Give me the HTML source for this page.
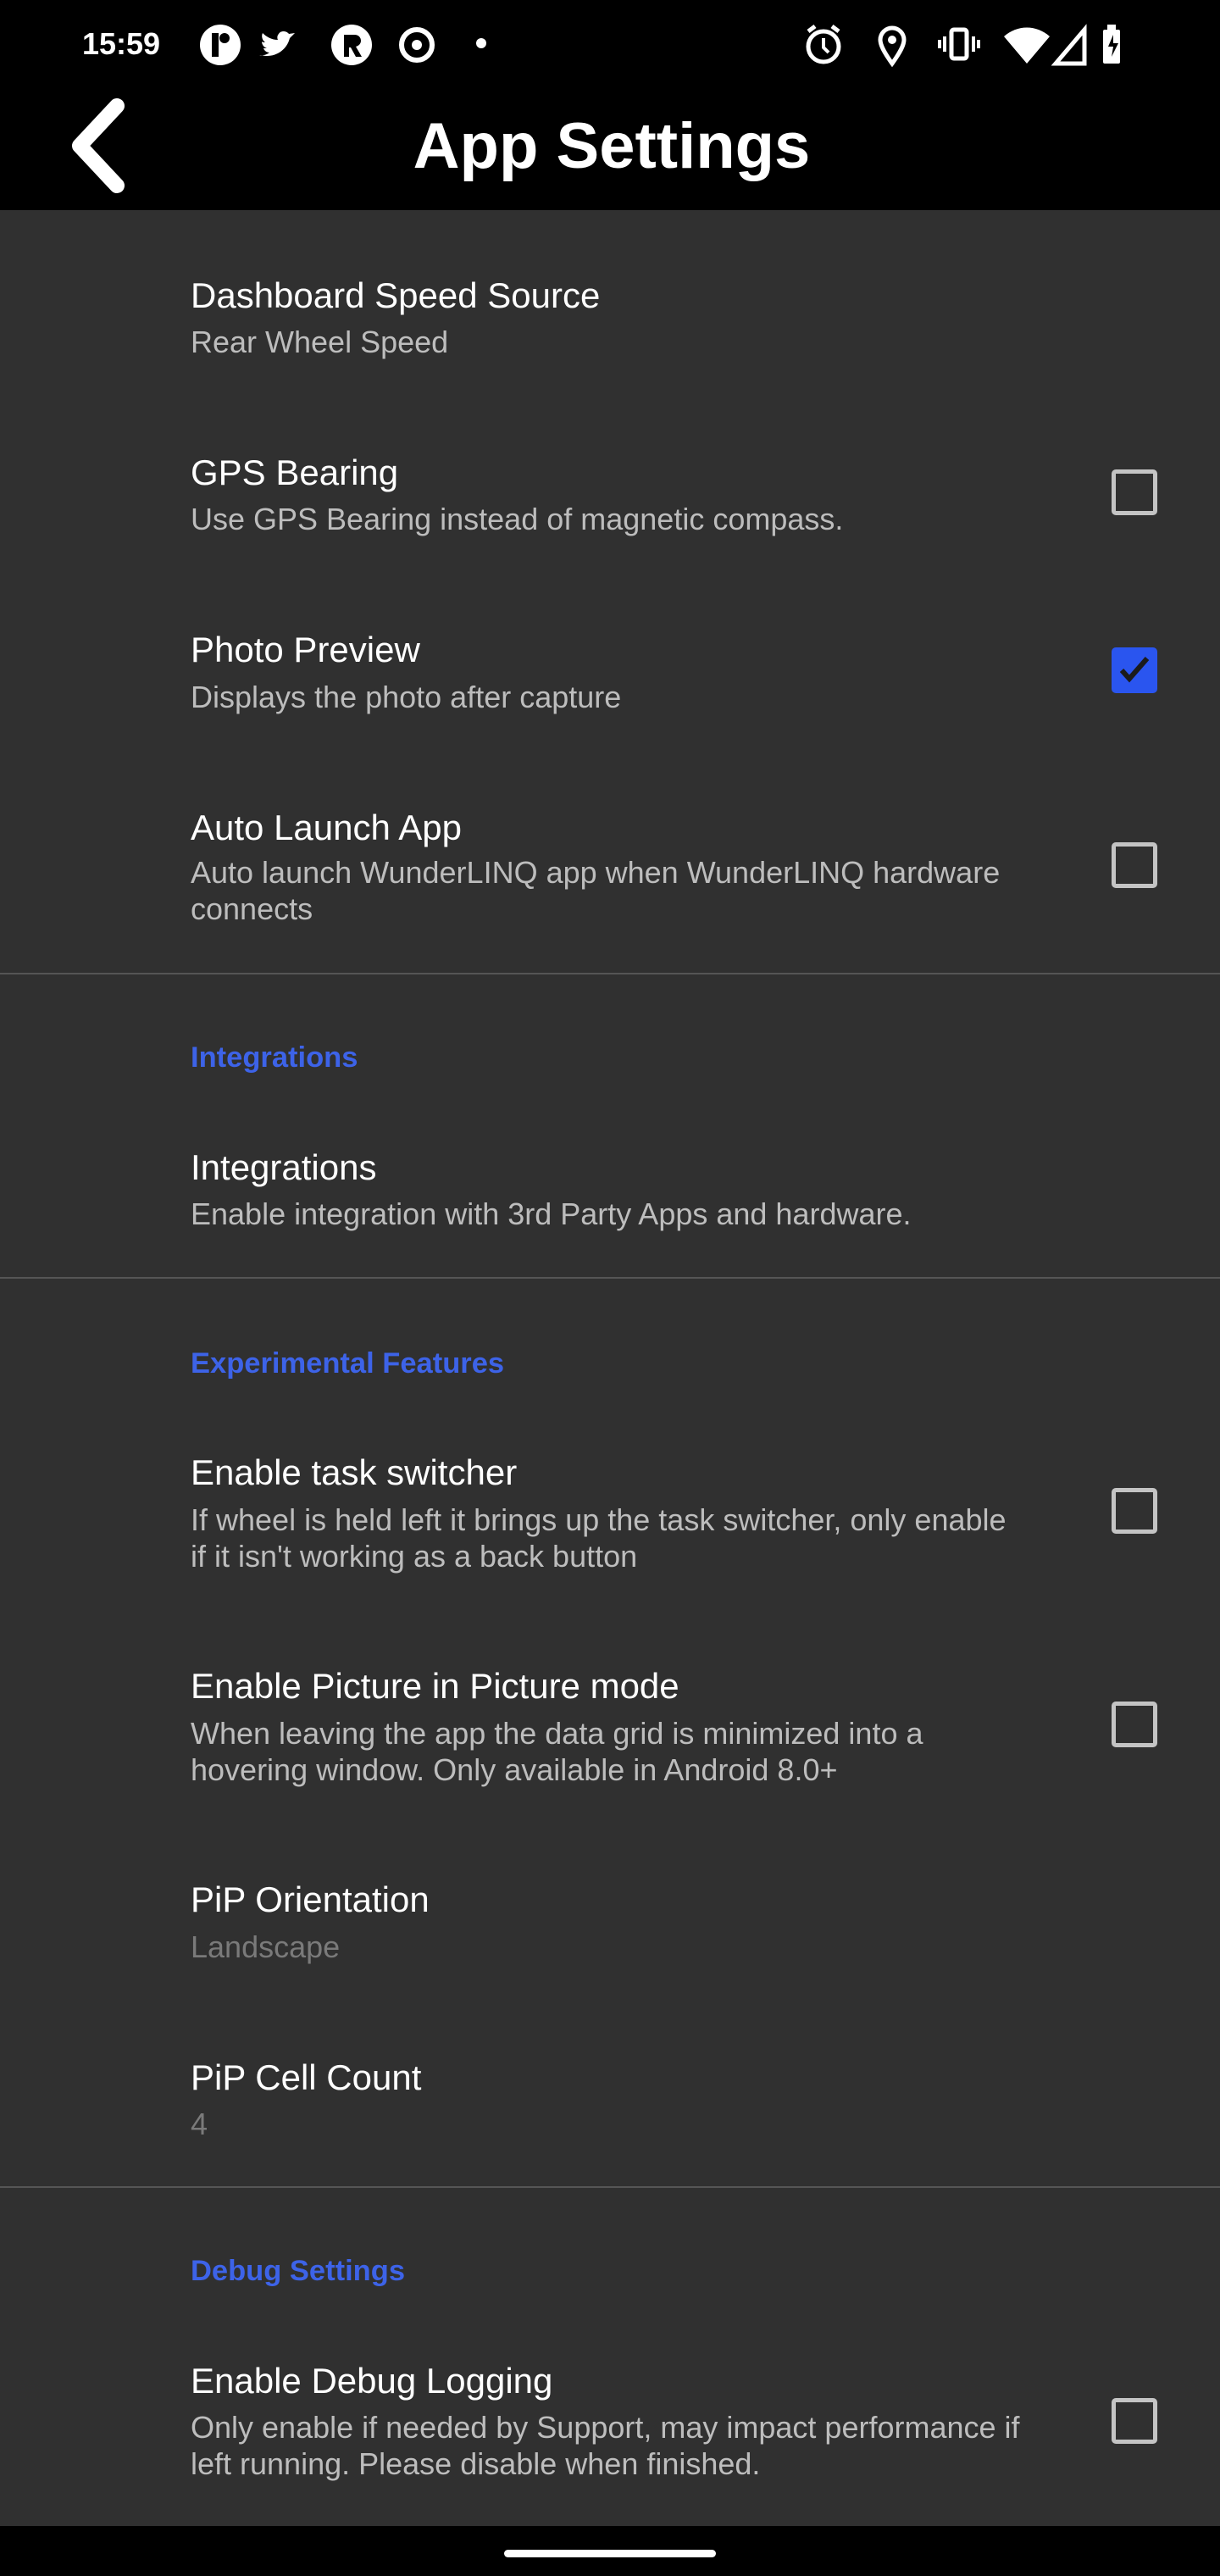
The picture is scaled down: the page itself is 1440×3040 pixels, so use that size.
<!DOCTYPE html>
<html><head><meta charset="utf-8"><style>
*{margin:0;padding:0;box-sizing:border-box}
body{width:1440px;height:3040px;background:#000;position:relative;overflow:hidden;font-family:"Liberation Sans",Roboto,sans-serif}
.content{position:absolute;left:0;top:248px;width:1440px;height:2733px;background:#303030}
.t{position:absolute;left:225px;font-size:42px;line-height:50px;color:#fff;white-space:nowrap}
.s{position:absolute;left:225px;font-size:36px;line-height:43px;color:#bdbdbd;white-space:nowrap}
.d{color:#7a7a7a}
.h{position:absolute;left:225px;font-size:34.5px;line-height:42px;color:#3d63e8;font-weight:bold;white-space:nowrap}
.div{position:absolute;left:0;width:1440px;height:2px;background:#555}
.cb{position:absolute;left:1312px;width:54px;height:54px;border:5px solid #c4c4c4;border-radius:5px}
.cb.on{background:#2a55ef;border-color:#2a55ef}
</style></head><body>
<div style="position:absolute;left:97px;top:30px;font-size:36px;line-height:44px;color:#fff;font-weight:bold">15:59</div>
<svg style="position:absolute;left:230px;top:25px" width="380" height="56" viewBox="0 0 380 56">
<circle cx="30" cy="28" r="24" fill="#fff"/><rect x="20" y="14" width="8" height="28" fill="#000"/><circle cx="35" cy="20" r="6" fill="#000"/>
<path d="M78 40c14 4 30-4 34-20l6-6-7 1c-3-4-10-4-12 0-2 2-2 5-1 7-8 0-14-4-18-8-2 4 0 9 3 11-2 0-3 0-4-1 0 4 3 7 6 8h-4c1 3 4 5 7 5-4 3-8 4-12 3z" fill="#fff"/>
<circle cx="185" cy="28" r="24" fill="#fff"/><path d="M176 16h12c6 0 8 4 8 7s-2 6-6 7l7 12h-7l-6-11h-2v11h-6z" fill="#000"/>
<circle cx="262" cy="28" r="18" fill="none" stroke="#fff" stroke-width="6"/><circle cx="262" cy="28" r="6" fill="#fff"/>
<circle cx="338" cy="26" r="6" fill="#fff"/>
</svg>
<svg style="position:absolute;left:940px;top:25px" width="420" height="56" viewBox="0 0 420 56">
<circle cx="32" cy="30" r="18" fill="none" stroke="#fff" stroke-width="5"/><path d="M32 20v11l6 6" stroke="#fff" stroke-width="4" fill="none"/><path d="M14 12l8-6M50 12l-8-6" stroke="#fff" stroke-width="5"/>
<path d="M113 50c-10-14-14-22-14-28a14 14 0 0 1 28 0c0 6-4 14-14 28z" fill="none" stroke="#fff" stroke-width="5"/><circle cx="113" cy="22" r="5" fill="#fff"/>
<rect x="183" y="10" width="18" height="34" rx="3" fill="none" stroke="#fff" stroke-width="5"/><path d="M175 18v18M209 18v18M169 22v10M215 22v10" stroke="#fff" stroke-width="4"/>
<path d="M245 18c16-14 38-14 54 0l-27 32z" fill="#fff"/>
<path d="M340 50V10L306 50z" fill="none" stroke="#fff" stroke-width="5"/>
<rect x="362" y="10" width="20" height="40" rx="2" fill="#fff"/><rect x="367" y="4" width="10" height="6" fill="#fff"/><path d="M374 16l-6 14h6l-2 12 8-16h-6z" fill="#000"/>
</svg>
<svg style="position:absolute;left:76px;top:115px" width="80" height="115" viewBox="0 0 80 115"><path d="M62 10L18 57l44 47" fill="none" stroke="#fff" stroke-width="18" stroke-linecap="round" stroke-linejoin="round"/></svg>
<div style="position:absolute;left:0;width:1440px;top:128px;text-align:center;font-size:76px;line-height:90px;color:#fff;font-weight:bold;padding-left:4px">App Settings</div>
<div class="content"></div>
<div class="t" style="top:324px">Dashboard Speed Source</div>
<div class="s" style="top:382px">Rear Wheel Speed</div>

<div class="t" style="top:533px">GPS Bearing</div>
<div class="s" style="top:591px">Use GPS Bearing instead of magnetic compass.</div>
<div class="cb" style="top:554px"></div>

<div class="t" style="top:742px">Photo Preview</div>
<div class="s" style="top:801px">Displays the photo after capture</div>
<div class="cb on" style="top:764px"><svg width="44" height="44" viewBox="0 0 44 44" style="position:absolute;left:0;top:0"><path d="M7 22l9 10L37 8" fill="none" stroke="#1b1b1b" stroke-width="6"/></svg></div>

<div class="t" style="top:952px">Auto Launch App</div>
<div class="s" style="top:1008px">Auto launch WunderLINQ app when WunderLINQ hardware<br>connects</div>
<div class="cb" style="top:994px"></div>

<div class="div" style="top:1148px"></div>
<div class="h" style="top:1227px">Integrations</div>
<div class="t" style="top:1353px">Integrations</div>
<div class="s" style="top:1411px">Enable integration with 3rd Party Apps and hardware.</div>

<div class="div" style="top:1507px"></div>
<div class="h" style="top:1588px">Experimental Features</div>
<div class="t" style="top:1713px">Enable task switcher</div>
<div class="s" style="top:1772px">If wheel is held left it brings up the task switcher, only enable<br>if it isn't working as a back button</div>
<div class="cb" style="top:1756px"></div>

<div class="t" style="top:1965px">Enable Picture in Picture mode</div>
<div class="s" style="top:2024px">When leaving the app the data grid is minimized into a<br>hovering window. Only available in Android 8.0+</div>
<div class="cb" style="top:2008px"></div>

<div class="t" style="top:2217px">PiP Orientation</div>
<div class="s d" style="top:2276px">Landscape</div>

<div class="t" style="top:2427px">PiP Cell Count</div>
<div class="s d" style="top:2485px">4</div>

<div class="div" style="top:2580px"></div>
<div class="h" style="top:2659px">Debug Settings</div>
<div class="t" style="top:2785px">Enable Debug Logging</div>
<div class="s" style="top:2843px">Only enable if needed by Support, may impact performance if<br>left running. Please disable when finished.</div>
<div class="cb" style="top:2830px"></div>

<div style="position:absolute;left:595px;top:3009px;width:250px;height:9px;border-radius:5px;background:#fff"></div>
</body></html>
